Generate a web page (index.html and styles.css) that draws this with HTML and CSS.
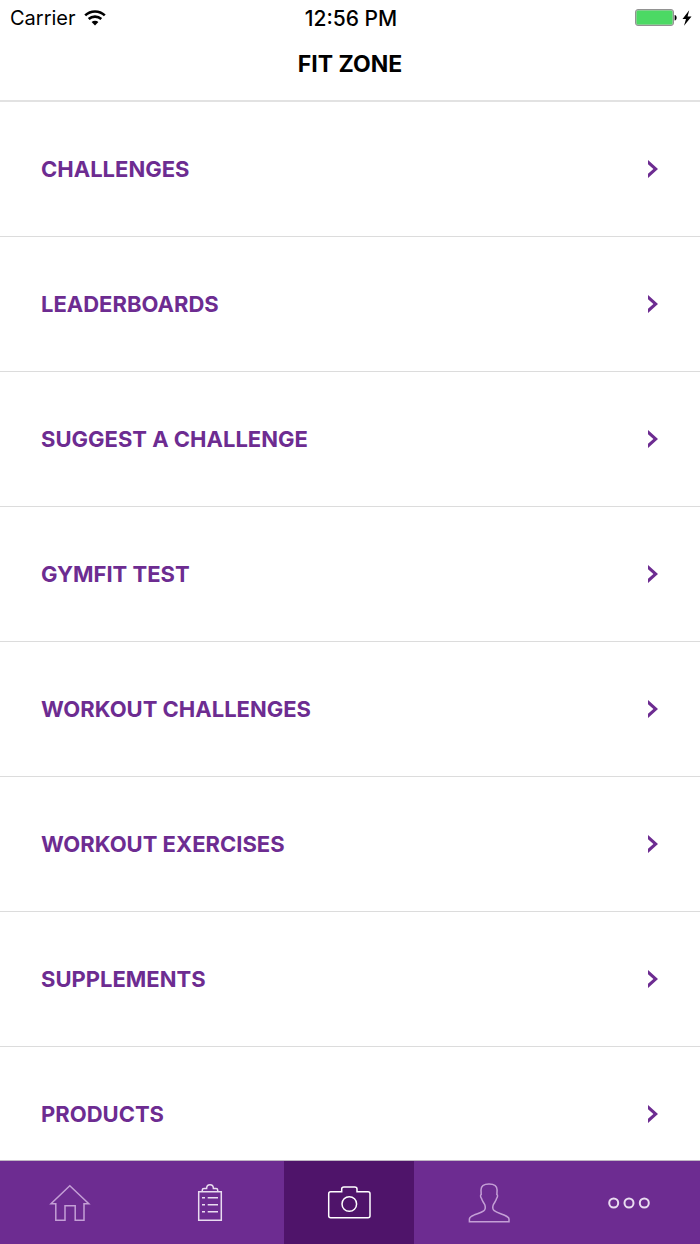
FILE: index.html
```html
<!DOCTYPE html>
<html lang="en">

<head>
  <meta charset="UTF-8" />
  <meta name="viewport" content="width=device-width, initial-scale=1.0" />
  <title>Fit Zone</title>
  <link rel="stylesheet" href="styles.css">
</head>

<body>
  <!-- shared arrow -->
  <svg class="defs">
    <symbol id="arrow" viewBox="0 0 12 18">
      <path d="M1 0 L11 9 L1 18 V13.8 L6.4 9 L1 4.2 Z" fill="currentColor" />
    </symbol>
  </svg>

  <header class="header">
    <div class="status">
      <div class="carrier">
        <span>Carrier</span>
        <svg class="wifi" viewBox="0 0 22 16">
          <g fill="none" stroke="#000" stroke-width="2.6">
            <path d="M1.2 5.4 C6.7 0.2 15.3 0.2 20.8 5.4" />
            <path d="M4.7 9 C8.2 5.8 13.8 5.8 17.3 9" />
          </g>
          <path d="M7.6 12 C9.5 10.4 12.5 10.4 14.4 12 L11 15.6 Z" />
        </svg>
      </div>
      <time class="time">12:56 PM</time>
      <div class="battery">
        <svg class="battery-icon" viewBox="0 0 42 18">
          <rect x="0.5" y="0.5" width="38" height="16" rx="2.5" fill="#b9c4b9" stroke="#929292" />
          <rect x="1.5" y="1.5" width="36" height="14" rx="1.5" fill="#4cd964" />
          <path d="M39.6 6 C42.3 6.2 42.3 11.2 39.6 11.4 Z" />
        </svg>
        <svg class="bolt" viewBox="0 0 10 16">
          <path d="M7.2 0.3 L0.5 9 H4 L2 15.8 L9.5 6.4 H5.6 Z" />
        </svg>
      </div>
    </div>
    <h1 class="title">FIT ZONE</h1>
  </header>

  <main class="content">
    <ul class="menu">
      <li><a class="item" href="#">CHALLENGES <svg class="arrow"><use href="#arrow" /></svg></a></li>
      <li><a class="item" href="#">LEADERBOARDS <svg class="arrow"><use href="#arrow" /></svg></a></li>
      <li><a class="item" href="#">SUGGEST A CHALLENGE <svg class="arrow"><use href="#arrow" /></svg></a></li>
      <li><a class="item" href="#">GYMFIT TEST <svg class="arrow"><use href="#arrow" /></svg></a></li>
      <li><a class="item" href="#">WORKOUT CHALLENGES <svg class="arrow"><use href="#arrow" /></svg></a></li>
      <li><a class="item" href="#">WORKOUT EXERCISES <svg class="arrow"><use href="#arrow" /></svg></a></li>
      <li><a class="item" href="#">SUPPLEMENTS <svg class="arrow"><use href="#arrow" /></svg></a></li>
      <li><a class="item" href="#">PRODUCTS <svg class="arrow"><use href="#arrow" /></svg></a></li>
    </ul>
  </main>

  <nav class="tabs">
    <a class="tab faded" href="#" aria-label="Home">
      <svg class="icon" viewBox="0 0 44 43">
        <path d="M21.8 4.8 L3 22.8 H7.8 V39.2 H17 V24.8 H27.2 V39.2 H36 V22.8 H40.8 Z" />
      </svg>
    </a>
    <a class="tab" href="#" aria-label="Plans">
      <svg class="icon" viewBox="0 0 44 43">
        <path d="M10.7 10.7 H33.3 V39.2 H10.7 Z" />
        <path d="M14.3 10.7 V9 Q14.3 7.4 16 7.4 H18.6 C18.8 2.6 25.2 2.6 25.4 7.4 H28 Q29.7 7.4 29.7 9 V10.7" />
        <path d="M14 16.7 H17 M19.7 16.7 H30 M14 23.7 H17 M19.7 23.7 H30 M14 30.7 H17 M19.7 30.7 H30" />
      </svg>
    </a>
    <a class="tab active" href="#" aria-label="Camera">
      <svg class="icon" viewBox="0 0 44 43">
        <path d="M3.7 10.8 H14.7 V8 Q14.7 5.9 17 5.9 H27.7 Q30 5.9 30 8 V10.8 H41 Q43 10.8 43 12.8 V34.8 Q43 36.8 41 36.8 H3.7 Q1.7 36.8 1.7 34.8 V12.8 Q1.7 10.8 3.7 10.8 Z" />
        <circle cx="22.3" cy="23" r="7.3" />
      </svg>
    </a>
    <a class="tab faded" href="#" aria-label="Profile">
      <svg class="icon" viewBox="0 0 44 43">
        <path d="M21 2.9 C16 2.9 13 5 13 9 L13.2 13.5 C12.2 13.8 12.4 16 13.4 17.2 C14 20 15.7 21.5 16.9 24 C17.6 26.5 17.6 28.5 15.7 29.8 C12.7 32 8.7 32.7 5.7 34.2 C2.7 35.5 1.4 36.2 1.4 38 V40.7 H41 V38 C41 36.2 39 35.4 36 34 C33 32.6 29.2 31.8 26.2 29.6 C24.5 28.3 24.5 26.3 25.2 24 C26.4 21.5 28.1 20 28.7 17.2 C29.7 16 29.9 13.8 28.9 13.5 L29.1 9 C29.1 5 26 2.9 21 2.9 Z" />
      </svg>
    </a>
    <a class="tab" href="#" aria-label="More">
      <svg class="icon dots" viewBox="0 0 44 43">
        <circle cx="5.7" cy="22" r="4.5" />
        <circle cx="21" cy="22" r="4.5" />
        <circle cx="36.3" cy="22" r="4.5" />
      </svg>
    </a>
  </nav>
</body>

</html>
```

FILE: styles.css
```css
* {
  margin: 0;
  padding: 0;
  list-style: none;
  box-sizing: border-box;
}

body {
  height: 100vh;
  display: flex;
  flex-direction: column;
  background-color: #fff;
  font-family: Inter, "Liberation Sans", sans-serif;
}

svg {
  display: block;
}

.defs {
  display: none;
}

/* header */
.header {
  border-bottom: 2px solid #e2e2e2;
}

.status {
  display: grid;
  grid-template-columns: 1fr auto 1fr;
  align-items: center;
  height: 36px;
  padding: 0 8px 0 10px;
  font-size: 20px;
}

.carrier {
  display: flex;
  align-items: center;
  gap: 8px;
}

.wifi {
  width: 22px;
  height: 16px;
}

.time {
  font-size: 21px;
  font-weight: 500;
}

.battery {
  display: flex;
  align-items: center;
  justify-content: flex-end;
  gap: 5px;
}

.battery-icon {
  width: 42px;
  height: 18px;
}

.bolt {
  width: 10px;
  height: 16px;
}

.title {
  height: 64px;
  line-height: 56px;
  font-size: 23px;
  text-align: center;
}

/* list */
.content {
  flex: 1;
  min-height: 0;
  overflow: hidden;
}

.item {
  display: flex;
  align-items: center;
  justify-content: space-between;
  height: 135px;
  padding: 0 41px;
  border-bottom: 1px solid #dcdcdc;
  color: #6d2c91;
  font-size: 22px;
  font-weight: 700;
  text-decoration: none;
}

.arrow {
  width: 12px;
  height: 18px;
}

/* bottom tabs */
.tabs {
  display: grid;
  grid-template-columns: repeat(5, 1fr);
  height: 84px;
  border-top: 1px solid #c0b8c4;
  background-color: #6d2c91;
}

.tab {
  display: flex;
  align-items: center;
  justify-content: center;
  color: #e9dcf0;
}

.faded {
  color: #c49fd6;
}

.active {
  margin: 0 6px 0 4px;
  background-color: #4f146a;
  color: #fff;
}

.icon {
  width: 44px;
  height: 43px;
  fill: none;
  stroke: currentColor;
  stroke-width: 1.5;
}

.dots {
  stroke-width: 2;
}
```
